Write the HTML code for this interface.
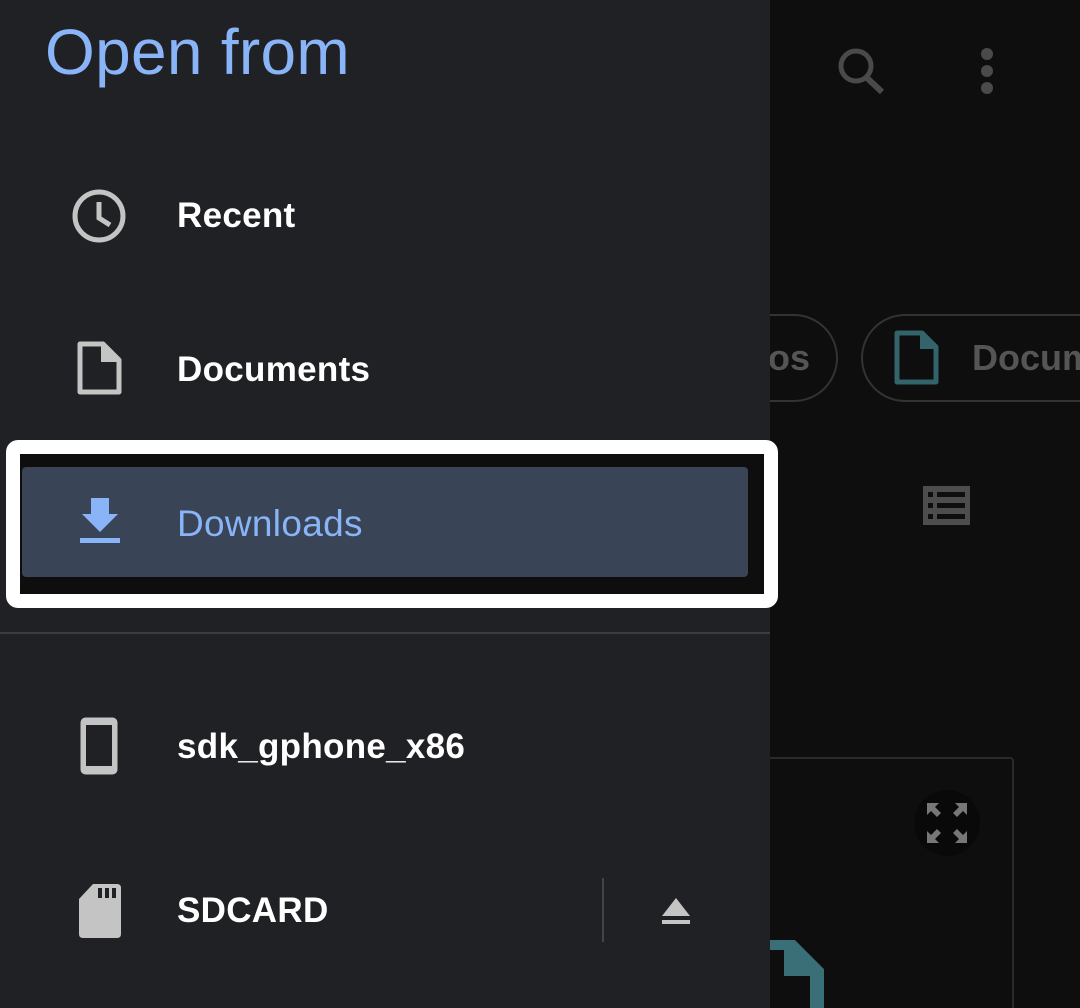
<!DOCTYPE html>
<html style="overflow:hidden;height:1008px"><head><style>
body{margin:0;width:1080px;height:1008px;overflow:hidden;background:#0e0e0e;font-family:"Liberation Sans",sans-serif;position:relative}
.a{position:absolute}
.drawer{left:0;top:0;width:770px;height:1008px;background:#202124}
.t{color:#fff;font-size:35px;font-weight:bold;letter-spacing:0.3px}
</style></head><body>
<svg class="a" style="left:830px;top:42px" width="60" height="56" viewBox="0 0 60 56"><circle cx="26" cy="24" r="15" fill="none" stroke="#4a4a4a" stroke-width="5"/><line x1="36" y1="35" x2="52" y2="50" stroke="#4a4a4a" stroke-width="6"/></svg>
<div class="a" style="left:981px;top:48px;width:12px;height:12px;border-radius:6px;background:#4a4a4a;box-shadow:0 17px 0 #4a4a4a,0 34px 0 #4a4a4a"></div>
<div class="a" style="left:700px;top:314px;width:134px;height:84px;border:2px solid #333;border-radius:44px"></div>
<div class="a" style="left:768px;top:337px;font-size:36px;color:#555;font-weight:bold">os</div>
<div class="a" style="left:861px;top:314px;width:260px;height:84px;border:2px solid #333;border-radius:44px"></div>
<svg class="a" style="left:892px;top:330px" width="50" height="56" viewBox="0 0 50 56"><path d="M5 3H30L44 17V52H5Z" fill="none" stroke="#33636b" stroke-width="5" stroke-linejoin="round"/><path d="M28 3V19H44" fill="#33636b"/></svg>
<div class="a" style="left:972px;top:337px;font-size:36px;color:#555;font-weight:bold">Docum</div>
<svg class="a" style="left:922px;top:485px" width="48" height="40" viewBox="0 0 48 40"><rect x="1" y="1" width="47" height="39" fill="#4d4d4d"/><rect x="6" y="7" width="5" height="5" fill="#0e0e0e"/><rect x="15" y="7" width="28" height="5" fill="#0e0e0e"/><rect x="6" y="18" width="5" height="5" fill="#0e0e0e"/><rect x="15" y="18" width="28" height="5" fill="#0e0e0e"/><rect x="6" y="29" width="5" height="5" fill="#0e0e0e"/><rect x="15" y="29" width="28" height="5" fill="#0e0e0e"/></svg>
<div class="a" style="left:700px;top:757px;width:310px;height:260px;border:2px solid #2a2a2a;border-radius:4px"></div>
<div class="a" style="left:914px;top:790px;width:66px;height:66px;border-radius:33px;background:#090909"></div>
<svg class="a" style="left:925px;top:801px" width="44" height="44" viewBox="0 0 44 44" fill="#777"><path d="M2 2H14L10 6L16 12L12 16L6 10L2 14Z"/><path d="M42 2H30L34 6L28 12L32 16L38 10L42 14Z"/><path d="M2 42H14L10 38L16 32L12 28L6 34L2 30Z"/><path d="M42 42H30L34 38L28 32L32 28L38 34L42 30Z"/></svg>
<svg class="a" style="left:740px;top:940px" width="90" height="68" viewBox="0 0 90 68"><path d="M0 3H48L77 32V68" fill="none" stroke="#3b6f77" stroke-width="14"/><path d="M44 0V36H80" fill="#3b6f77"/></svg>
<div class="a drawer"></div>
<div class="a" style="left:45px;top:15px;font-size:64px;color:#8ab4f8;letter-spacing:0.3px">Open from</div>
<svg class="a" style="left:71px;top:188px" width="56" height="56" viewBox="0 0 56 56"><circle cx="28" cy="28" r="24" fill="none" stroke="#c4c4c4" stroke-width="5"/><path d="M28 14V30L39 37" fill="none" stroke="#c4c4c4" stroke-width="5"/></svg>
<div class="a t" style="left:177px;top:196px">Recent</div>
<svg class="a" style="left:76px;top:340px" width="48" height="56" viewBox="0 0 48 56"><path d="M4 4H27L43 20V52H4Z" fill="none" stroke="#c4c4c4" stroke-width="5" stroke-linejoin="round"/><path d="M25 4V22H43" fill="#c4c4c4"/></svg>
<div class="a t" style="left:177px;top:350px">Documents</div>
<div class="a" style="left:6px;top:440px;width:744px;height:140px;border:14px solid #fff;border-radius:12px;background:#0e0e0e"></div>
<div class="a" style="left:22px;top:467px;width:726px;height:110px;background:#394457;border-radius:4px"></div>
<svg class="a" style="left:78px;top:498px" width="44" height="48" viewBox="0 0 44 48"><path d="M13 0H31V16H40L22 34L4 16H13Z" fill="#8ab4f8"/><rect x="2" y="40" width="40" height="5" fill="#8ab4f8"/></svg>
<div class="a t" style="left:177px;top:503px;color:#8ab4f8;font-weight:normal;font-size:37px">Downloads</div>
<div class="a" style="left:0;top:632px;width:770px;height:2px;background:#3c3c3f"></div>
<svg class="a" style="left:78px;top:715px" width="44" height="62" viewBox="0 0 44 62"><rect x="2.5" y="2.5" width="37" height="57" rx="5" fill="#c4c4c4"/><rect x="8" y="10" width="26" height="41" fill="#202124"/></svg>
<div class="a t" style="left:177px;top:727px">sdk_gphone_x86</div>
<svg class="a" style="left:77px;top:882px" width="46" height="58" viewBox="0 0 46 58"><path d="M16 2H40Q44 2 44 6V52Q44 56 40 56H6Q2 56 2 52V17Z" fill="#c4c4c4"/><rect x="21" y="6" width="4" height="10" fill="#202124"/><rect x="28" y="6" width="4" height="10" fill="#202124"/><rect x="35" y="6" width="4" height="10" fill="#202124"/></svg>
<div class="a t" style="left:177px;top:891px">SDCARD</div>
<div class="a" style="left:602px;top:878px;width:2px;height:64px;background:#444"></div>
<svg class="a" style="left:660px;top:896px" width="32" height="30" viewBox="0 0 32 30"><path d="M16 2L30 20H2Z" fill="#c4c4c4"/><rect x="2" y="24" width="28" height="4" fill="#c4c4c4"/></svg>
</body></html>
